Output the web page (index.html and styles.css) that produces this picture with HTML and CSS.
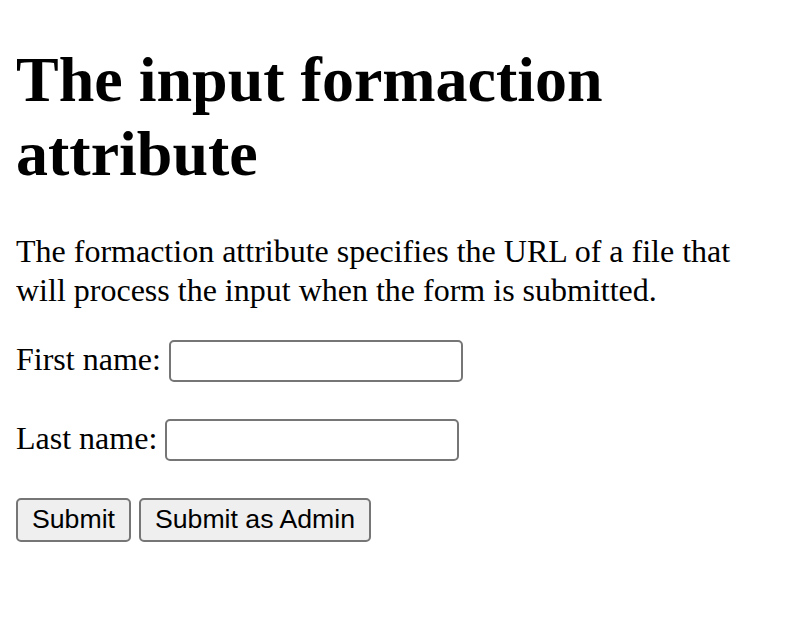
FILE: index.html
```html
<!DOCTYPE html>
<html>
<head>
<meta charset="utf-8">
<link rel="stylesheet" href="styles.css">
</head>
<body class="page">
<h1 class="title">The input formaction attribute</h1>
<p class="intro">The formaction attribute specifies the URL of a file that will process the input when the form is submitted.</p>
<form class="form" action="#">
  <label class="label" for="fname">First name:</label> <input class="field" type="text" id="fname" name="fname"><br><br>
  <label class="label" for="lname">Last name:</label> <input class="field" type="text" id="lname" name="lname"><br><br>
  <input class="btn" type="submit" value="Submit"> <input class="btn" type="submit" value="Submit as Admin">
</form>
</body>
</html>
```

FILE: styles.css
```css
.page {
  margin: 16px;
  font-family: "Liberation Serif", "Times New Roman", serif;
  font-size: 32px;
  color: #000;
  background: #fff;
}

.title {
  font-size: 64px;
  font-weight: bold;
  margin: 27px 0 40.88px;
}

.intro {
  margin: 28px 0 30px;
  line-height: 39px;
}

.form {
  margin: 0;
}

.field {
  box-sizing: border-box;
  width: 294px;
  height: 42px;
  border: 2px solid #767676;
  border-radius: 5px;
  padding: 2px 4px;
  font-family: "Liberation Sans", Arial, sans-serif;
  font-size: 26.67px;
  background: #fff;
  vertical-align: baseline;
}

.btn {
  box-sizing: border-box;
  height: 44px;
  border: 2px solid #767676;
  border-radius: 5px;
  padding: 0 14px;
  font-family: "Liberation Sans", Arial, sans-serif;
  font-size: 26.67px;
  color: #000;
  background: #efefef;
}
```
